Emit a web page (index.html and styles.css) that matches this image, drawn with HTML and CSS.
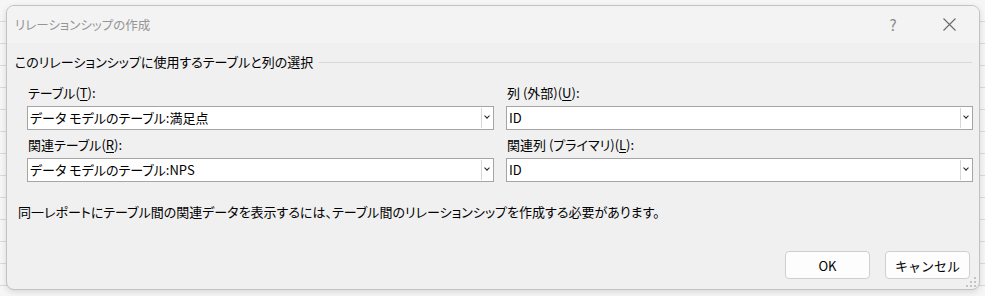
FILE: index.html
```html
<!DOCTYPE html>
<html lang="ja">
<head>
  <meta charset="UTF-8">
  <title>リレーションシップの作成</title>
  <link rel="stylesheet" href="styles.css">
</head>
<body>
<div class="dialog">

  <!-- title bar -->
  <div class="titlebar">
    <span class="title">リレーションシップの作成</span>
    <span class="help">?</span>
    <span class="close">
      <svg width="13" height="13" viewBox="0 0 13 13"><path d="M0.5 0.5 L12.5 12.5 M12.5 0.5 L0.5 12.5" stroke="#6a6a6a" stroke-width="1.1" fill="none"/></svg>
    </span>
  </div>

  <div class="body">
    <div class="group-head">
      <span>このリレーションシップに使用するテーブルと列の選択</span>
      <span class="rule"></span>
    </div>

    <div class="fields">
      <div class="col">
        <label>テーブル(<u>T</u>):</label>
        <div class="combo"><span class="val">データ モデルのテーブル:満足点</span><span class="arrow"></span></div>
        <label class="second">関連テーブル(<u>R</u>):</label>
        <div class="combo"><span class="val">データ モデルのテーブル:NPS</span><span class="arrow"></span></div>
      </div>
      <div class="col">
        <label>列 (外部)(<u>U</u>):</label>
        <div class="combo"><span class="val">ID</span><span class="arrow"></span></div>
        <label class="second">関連列 (プライマリ)(<u>L</u>):</label>
        <div class="combo"><span class="val">ID</span><span class="arrow"></span></div>
      </div>
    </div>

    <p class="note">同一レポートにテーブル間の関連データを表示するには、テーブル間のリレーションシップを作成する必要があります。</p>

    <div class="buttons">
      <button class="btn">OK</button>
      <button class="btn">キャンセル</button>
    </div>
  </div>

  <!-- resize grip -->
  <svg class="grip" width="11" height="11" viewBox="0 0 11 11">
    <rect x="8" y="0" width="2" height="2" fill="#c4c4c4"/>
    <rect x="4" y="4" width="2" height="2" fill="#c4c4c4"/>
    <rect x="8" y="4" width="2" height="2" fill="#c4c4c4"/>
    <rect x="0" y="8" width="2" height="2" fill="#c4c4c4"/>
    <rect x="4" y="8" width="2" height="2" fill="#c4c4c4"/>
    <rect x="8" y="8" width="2" height="2" fill="#c4c4c4"/>
  </svg>
</div>
</body>
</html>
```

FILE: styles.css
```css
body {
  margin: 0;
  padding: 5px 5px 6px 6px;
  background-color: #f6f6f6;
  background-image: repeating-linear-gradient(to bottom, transparent 0, transparent 21px, #dadada 21px, #dadada 22px);
  font-family: "Noto Sans CJK JP", "Noto Sans", sans-serif;
  font-feature-settings: "palt";
  font-size: 13px;
  color: #000;
}

.dialog {
  position: relative;
  width: 972px;
  height: 283px;
  background: #f0f0f0;
  border: 1px solid #c2c2c2;
  border-radius: 8px;
  box-shadow: 0 2px 6px rgba(0,0,0,0.12);
  display: flex;
  flex-direction: column;
  overflow: hidden;
}

.titlebar {
  height: 37px;
  background: #f3f3f3;
  display: flex;
  align-items: center;
  padding-left: 8px;
}
.title { flex: 1; font-size: 12.5px; color: #959595; }
.help { width: 20px; text-align: center; font-size: 15px; color: #8a8a8a; margin-right: 40px; }
.close { width: 13px; margin-right: 23px; display: flex; }

.body {
  flex: 1;
  display: flex;
  flex-direction: column;
  padding: 9px 7px 9px 8px;
}

.group-head { display: flex; align-items: center; line-height: 20px; }
.group-head .rule { flex: 1; height: 1px; background: #d8d8d8; margin-left: 6px; }

.fields {
  display: grid;
  grid-template-columns: 467px 467px;
  column-gap: 12px;
  margin: 10px 0 0 12px;
}
.col label { display: block; line-height: 22px; margin: 0 0 2px 1px; }
.col label.second { margin-top: 4px; }
.col u { text-decoration-thickness: 1px; text-underline-offset: 2px; }

.combo {
  height: 22px;
  border: 1px solid #a5a5a5;
  background: #fff;
  display: flex;
  align-items: center;
}
.combo .val { flex: 1; padding-left: 2px; line-height: 22px; }
.combo .arrow {
  width: 11px;
  height: 20px;
  border-left: 1px solid #d7d7d7;
  position: relative;
}
.combo .arrow::after {
  content: "";
  position: absolute;
  left: 3px;
  top: 6px;
  width: 3px;
  height: 3px;
  border-right: 1.3px solid #222;
  border-bottom: 1.3px solid #222;
  transform: rotate(45deg);
}

.note { margin: 20px 0 0 3px; line-height: 20px; }

.buttons {
  margin-top: auto;
  display: flex;
  justify-content: flex-end;
  gap: 15px;
  padding-right: 2px;
  margin-bottom: 1px;
}
.btn {
  width: 85px;
  height: 28px;
  background: #fdfdfd;
  border: 1px solid #cfcfcf;
  border-radius: 4px;
  font-family: inherit;
  font-size: 13px;
  color: #000;
  padding: 0;
}

.grip { position: absolute; right: 2px; bottom: 1px; }
```
